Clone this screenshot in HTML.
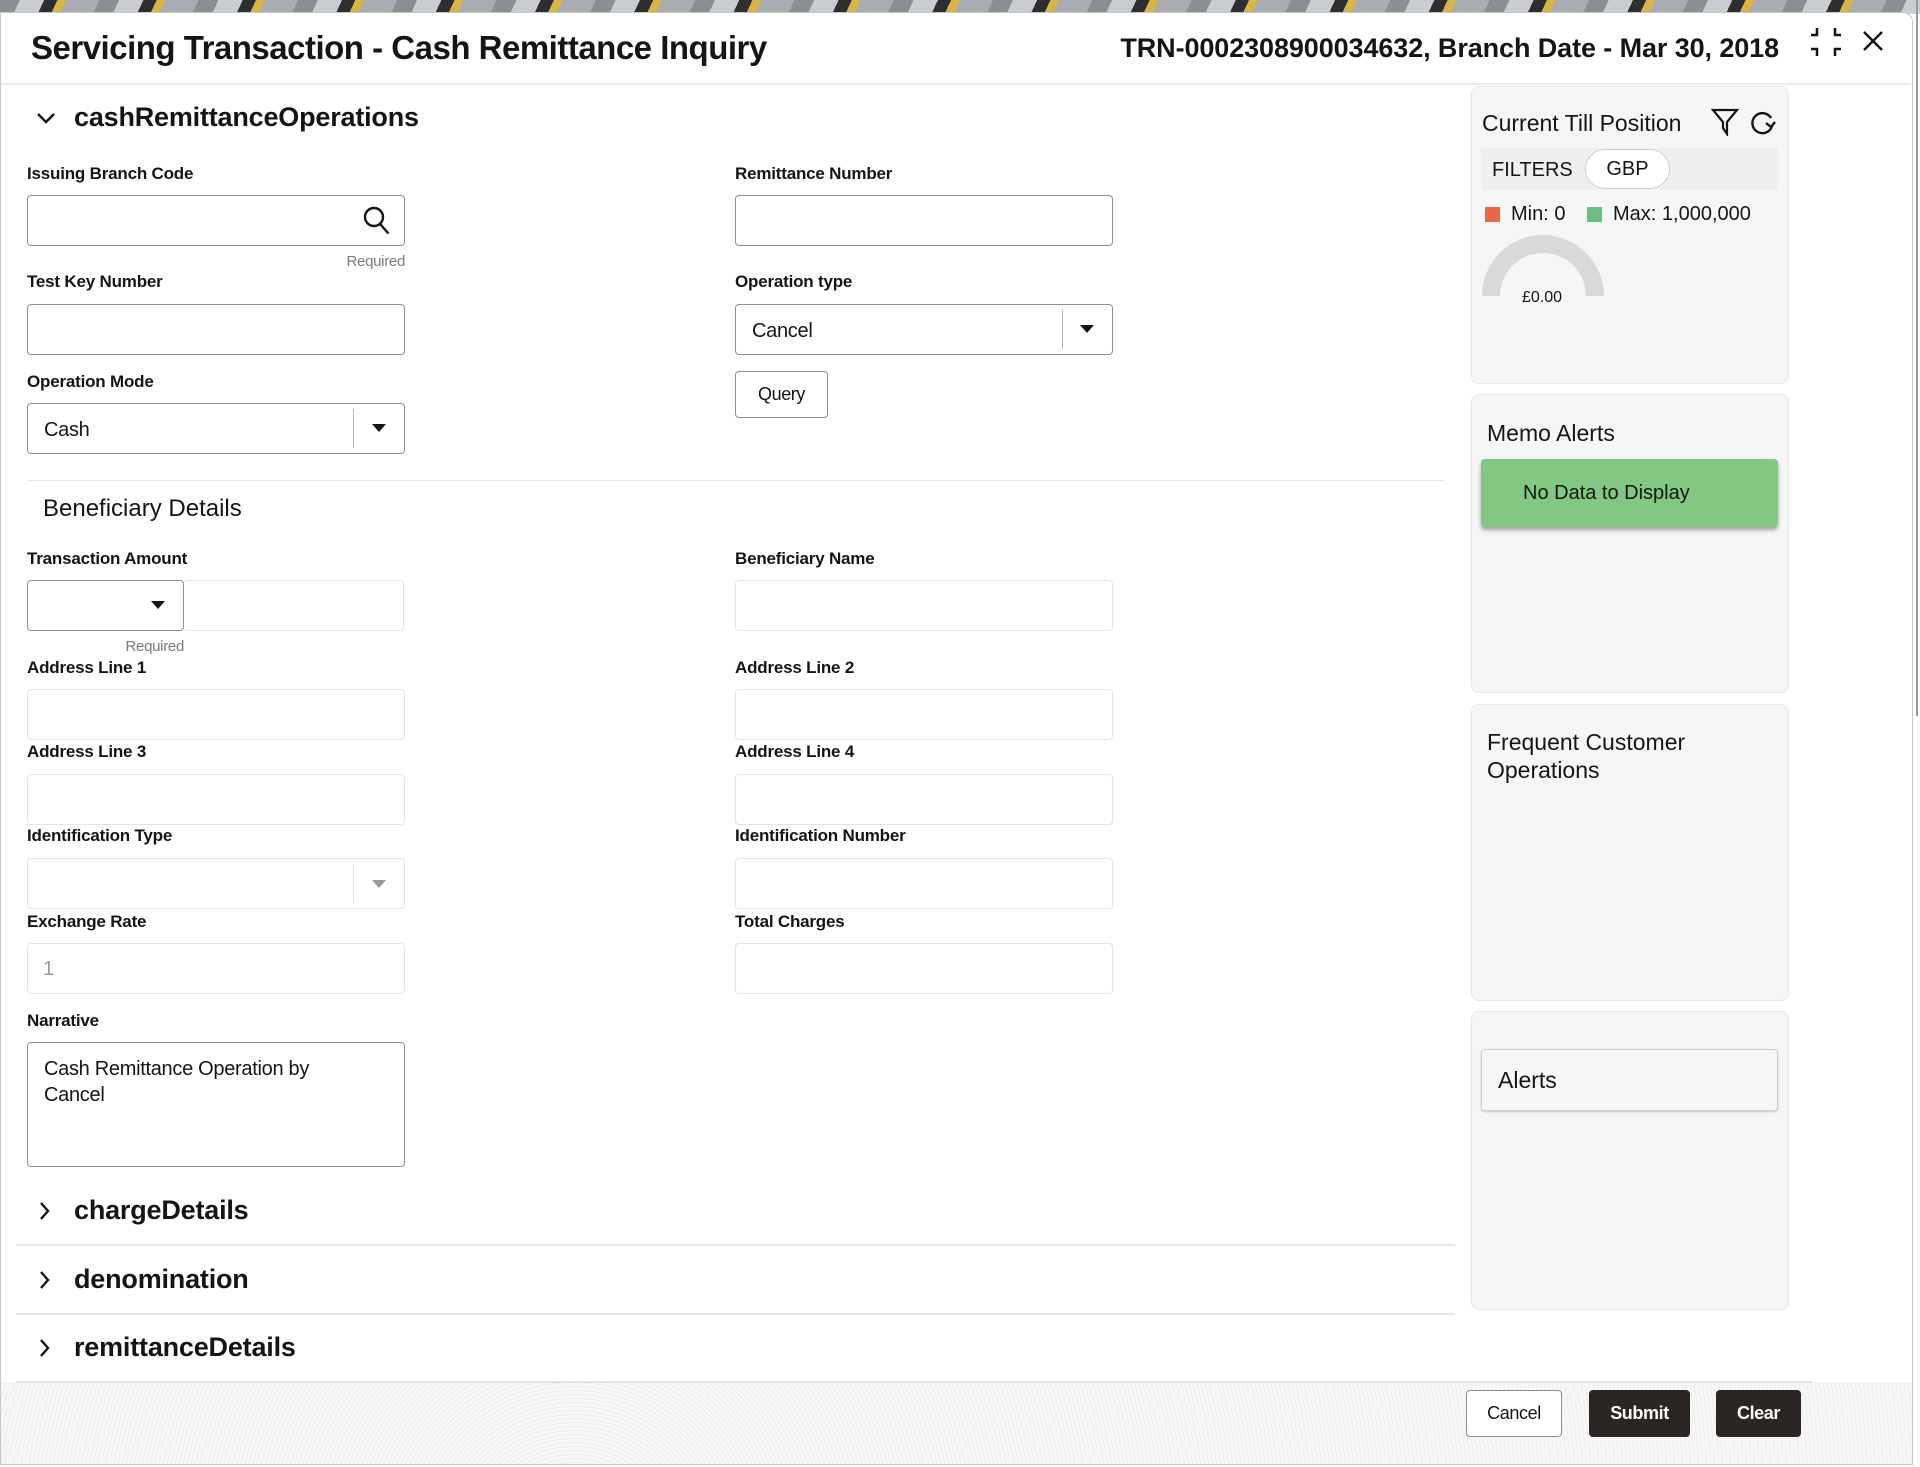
<!DOCTYPE html>
<html><head><meta charset="utf-8">
<style>
*{box-sizing:border-box;margin:0;padding:0}
body{width:1920px;height:1467px;position:relative;overflow:hidden;background:#fff;font-family:"Liberation Sans",sans-serif;color:#161513}
.a{position:absolute}
.top{left:0;top:0;width:1920px;height:14px;background:repeating-linear-gradient(115deg,#8a8f96 0 18px,#c9ccd1 18px 40px,#2e2e30 40px 52px,#d8b545 52px 60px,#a9adb3 60px 90px)}
.modal{left:0;top:12px;width:1913px;height:1453px;background:#fff;border:1px solid #c8c8c8;border-radius:0 10px 0 0}
.lbl{font-size:17px;font-weight:bold;letter-spacing:-0.2px;color:#161513}
.in{border:1px solid #8f8f8f;border-radius:4px;background:#fff;height:51px}
.in2{border:1px solid #e4e4e4;border-radius:4px;background:#fff;height:51px}
.req{font-size:15px;color:#7a7a7a;letter-spacing:-0.3px}
.val{font-size:20px;color:#161513;letter-spacing:-0.3px}
.sep{width:1px;background:#b8b8b8}
.tri{width:0;height:0;border-left:7px solid transparent;border-right:7px solid transparent;border-top:8px solid #161513}
.sec{font-size:27px;font-weight:bold;letter-spacing:-0.2px}
.hr{height:2px;background:#e6e6e6}
.card{left:1471px;width:318px;background:#f6f6f6;border:1px solid #e8e8e8;border-radius:8px}
.ct{font-size:23px;color:#161513}
.btn{height:47px;border-radius:4px;font-size:18px;font-weight:bold;letter-spacing:-0.4px;display:flex;align-items:center;justify-content:center}
</style></head><body>
<div class="a top"></div>
<div class="a" style="left:1916px;top:0;width:2px;height:716px;background:#9a9a9a"></div>
<div class="a modal"></div>
<!-- header -->
<div class="a" style="left:31px;top:29px;font-size:33px;font-weight:bold;letter-spacing:-0.5px;white-space:nowrap">Servicing Transaction - Cash Remittance Inquiry</div>
<div class="a" style="left:1083px;top:33px;width:696px;text-align:right;font-size:27px;font-weight:bold;letter-spacing:-0.1px;white-space:nowrap">TRN-0002308900034632, Branch Date - Mar 30, 2018</div>
<svg class="a" style="left:1808px;top:25px" width="36" height="34" viewBox="0 0 36 34" fill="none" stroke="#161513" stroke-width="2.5"><path d="M9 3v7H3M27 3v7h6M9 31v-7H3M27 31v-7h6"/></svg>
<svg class="a" style="left:1861px;top:31px" width="24" height="20" viewBox="0 0 24 20" fill="none" stroke="#161513" stroke-width="2.5"><path d="M3 1l18 18M21 1L3 19"/></svg>
<div class="a" style="left:1px;top:83px;width:1910px;height:2px;background:#ececec"></div>
<!-- section 1 -->
<svg class="a" style="left:36px;top:111px" width="20" height="14" viewBox="0 0 20 14" fill="none" stroke="#161513" stroke-width="2.4"><path d="M2 3l8 8 8-8"/></svg>
<div class="a sec" style="left:74px;top:102px">cashRemittanceOperations</div>

<div class="a lbl" style="left:27px;top:164px">Issuing Branch Code</div>
<div class="a in" style="left:27px;top:195px;width:378px"></div>
<svg class="a" style="left:362px;top:205px" width="30" height="32" viewBox="0 0 30 32" fill="none" stroke="#161513" stroke-width="2.4"><circle cx="12" cy="12" r="9"/><path d="M18.5 19.5l8 9"/></svg>
<div class="a req" style="left:300px;top:253px;width:105px;text-align:right">Required</div>

<div class="a lbl" style="left:735px;top:164px">Remittance Number</div>
<div class="a in" style="left:735px;top:195px;width:378px"></div>

<div class="a lbl" style="left:27px;top:272px">Test Key Number</div>
<div class="a in" style="left:27px;top:304px;width:378px"></div>

<div class="a lbl" style="left:735px;top:272px">Operation type</div>
<div class="a in" style="left:735px;top:304px;width:378px"></div>
<div class="a val" style="left:752px;top:320px">Cancel</div>
<div class="a sep" style="left:1062px;top:310px;height:39px"></div>
<div class="a tri" style="left:1080px;top:325px"></div>

<div class="a lbl" style="left:27px;top:372px">Operation Mode</div>
<div class="a in" style="left:27px;top:403px;width:378px"></div>
<div class="a val" style="left:44px;top:419px">Cash</div>
<div class="a sep" style="left:353px;top:409px;height:39px"></div>
<div class="a tri" style="left:372px;top:424px"></div>

<div class="a btn" style="left:735px;top:371px;width:93px;border:1px solid #8f8f8f;font-weight:normal;font-size:18px">Query</div>

<div class="a" style="left:27px;top:480px;width:1418px;height:1px;background:#e6e6e6"></div>
<div class="a" style="left:43px;top:495px;font-size:24px;letter-spacing:0">Beneficiary Details</div>

<div class="a lbl" style="left:27px;top:549px">Transaction Amount</div>
<div class="a in2" style="left:183px;top:580px;width:221px"></div>
<div class="a in" style="left:27px;top:580px;width:157px"></div>
<div class="a tri" style="left:151px;top:601px"></div>
<div class="a req" style="left:100px;top:638px;width:84px;text-align:right">Required</div>

<div class="a lbl" style="left:735px;top:549px">Beneficiary Name</div>
<div class="a in2" style="left:735px;top:580px;width:378px"></div>

<div class="a lbl" style="left:27px;top:658px">Address Line 1</div>
<div class="a in2" style="left:27px;top:689px;width:378px"></div>
<div class="a lbl" style="left:735px;top:658px">Address Line 2</div>
<div class="a in2" style="left:735px;top:689px;width:378px"></div>

<div class="a lbl" style="left:27px;top:742px">Address Line 3</div>
<div class="a in2" style="left:27px;top:774px;width:378px"></div>
<div class="a lbl" style="left:735px;top:742px">Address Line 4</div>
<div class="a in2" style="left:735px;top:774px;width:378px"></div>

<div class="a lbl" style="left:27px;top:826px">Identification Type</div>
<div class="a in2" style="left:27px;top:858px;width:378px"></div>
<div class="a" style="left:353px;top:864px;width:1px;height:39px;background:#e0e0e0"></div>
<div class="a tri" style="left:372px;top:880px;border-top-color:#9a9a9a"></div>
<div class="a lbl" style="left:735px;top:826px">Identification Number</div>
<div class="a in2" style="left:735px;top:858px;width:378px"></div>

<div class="a lbl" style="left:27px;top:912px">Exchange Rate</div>
<div class="a in2" style="left:27px;top:943px;width:378px"></div>
<div class="a val" style="left:43px;top:958px;color:#9a9a9a">1</div>
<div class="a lbl" style="left:735px;top:912px">Total Charges</div>
<div class="a in2" style="left:735px;top:943px;width:378px"></div>

<div class="a lbl" style="left:27px;top:1011px">Narrative</div>
<div class="a in" style="left:27px;top:1042px;width:378px;height:125px"></div>
<div class="a val" style="left:44px;top:1056px;line-height:26px;width:300px">Cash Remittance Operation by Cancel</div>

<!-- collapsed sections -->
<svg class="a" style="left:38px;top:1200px" width="12" height="22" viewBox="0 0 12 22" fill="none" stroke="#161513" stroke-width="2.4"><path d="M3 3l7 8-7 8"/></svg>
<div class="a sec" style="left:74px;top:1195px">chargeDetails</div>
<div class="a hr" style="left:16px;top:1244px;width:1439px"></div>
<svg class="a" style="left:38px;top:1269px" width="12" height="22" viewBox="0 0 12 22" fill="none" stroke="#161513" stroke-width="2.4"><path d="M3 3l7 8-7 8"/></svg>
<div class="a sec" style="left:74px;top:1264px">denomination</div>
<div class="a hr" style="left:16px;top:1313px;width:1439px"></div>
<svg class="a" style="left:38px;top:1337px" width="12" height="22" viewBox="0 0 12 22" fill="none" stroke="#161513" stroke-width="2.4"><path d="M3 3l7 8-7 8"/></svg>
<div class="a sec" style="left:74px;top:1332px">remittanceDetails</div>

<!-- footer -->
<div class="a" style="left:1px;top:1382px;width:1911px;height:82px;background:repeating-radial-gradient(circle at 30% 200%,#f7f7f7 0 3px,#ececec 3px 4px)"></div>
<div class="a" style="left:16px;top:1381px;width:1796px;height:2px;background:#e2e2e2"></div>
<div class="a btn" style="left:1466px;top:1390px;width:96px;border:1px solid #8f8f8f;background:#fff;font-weight:normal">Cancel</div>
<div class="a btn" style="left:1589px;top:1390px;width:101px;background:#2b2623;color:#fff">Submit</div>
<div class="a btn" style="left:1716px;top:1390px;width:85px;background:#2b2623;color:#fff">Clear</div>

<!-- right cards -->
<div class="a card" style="top:86px;height:298px"></div>
<div class="a ct" style="left:1482px;top:110px">Current Till Position</div>
<svg class="a" style="left:1711px;top:108px" width="28" height="28" viewBox="0 0 28 28" fill="none" stroke="#161513" stroke-width="2.2"><path d="M2 2h24l-10 12v12l-4-6v-6z"/></svg>
<svg class="a" style="left:1749px;top:110px" width="28" height="26" viewBox="0 0 28 26" fill="none" stroke="#161513" stroke-width="2.4"><path d="M22 8a10 10 0 1 0 1 8"/><path d="M17 13l5 4 4-5" /></svg>
<div class="a" style="left:1481px;top:148px;width:297px;height:42px;background:#efefef"></div>
<div class="a" style="left:1492px;top:159px;font-size:20px">FILTERS</div>
<div class="a" style="left:1585px;top:149px;width:85px;height:40px;background:#fff;border:1px solid #cfcfcf;border-radius:20px;font-size:20px;display:flex;align-items:center;justify-content:center">GBP</div>
<div class="a" style="left:1485px;top:207px;width:15px;height:15px;background:#e8674a"></div>
<div class="a" style="left:1511px;top:203px;font-size:20px">Min: 0</div>
<div class="a" style="left:1587px;top:207px;width:15px;height:15px;background:#6cbf83"></div>
<div class="a" style="left:1613px;top:203px;font-size:20px">Max: 1,000,000</div>
<svg class="a" style="left:1482px;top:234px" width="125" height="62" viewBox="0 0 125 62"><path d="M0 62A61 61 0 0 1 122 62H104A43 43 0 0 0 18 62Z" fill="#d9d9d9"/></svg>
<div class="a" style="left:1522px;top:289px;font-size:16px">£0.00</div>

<div class="a card" style="top:394px;height:299px"></div>
<div class="a ct" style="left:1487px;top:420px">Memo Alerts</div>
<div class="a" style="left:1481px;top:459px;width:297px;height:68px;background:#82c882;border-radius:4px;box-shadow:0 3px 4px rgba(0,0,0,.35);font-size:20px;display:flex;align-items:center;padding-left:42px">No Data to Display</div>

<div class="a card" style="top:704px;height:297px"></div>
<div class="a ct" style="left:1487px;top:728px;line-height:28px;width:280px">Frequent Customer Operations</div>

<div class="a card" style="top:1011px;height:299px"></div>
<div class="a" style="left:1481px;top:1049px;width:297px;height:62px;border:1px solid #cfcfcf;border-radius:4px;box-shadow:0 1px 2px rgba(0,0,0,.2);font-size:23px;display:flex;align-items:center;padding-left:16px">Alerts</div>
</body></html>
